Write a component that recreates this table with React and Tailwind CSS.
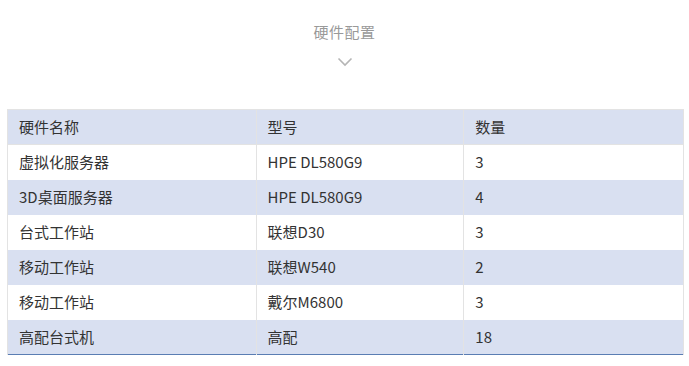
const rows = [
  ["虚拟化服务器", "HPE DL580G9", "3"],
  ["3D桌面服务器", "HPE DL580G9", "4"],
  ["台式工作站", "联想D30", "3"],
  ["移动工作站", "联想W540", "2"],
  ["移动工作站", "戴尔M6800", "3"],
  ["高配台式机", "高配", "18"],
];

export default function App() {
  return (
    <div className="w-[689px] h-[366px] bg-white font-['Microsoft_YaHei','Noto_Sans_CJK_SC',sans-serif] text-[#333]">
      <div className="flex flex-col items-center pt-[22px] h-[109px]">
        <h2 className="text-[15px] leading-[20px] text-[#999] tracking-[0.5px]">硬件配置</h2>
        <svg className="mt-[15px]" width="16" height="10" viewBox="0 0 16 10" fill="none">
          <path d="M1.5 1.5 L8 8 L14.5 1.5" stroke="#b5b5b5" strokeWidth="1.6" />
        </svg>
      </div>

      <table className="ml-[7px] w-[677px] border-collapse text-[15px] border-b border-b-[#5a7db3]">
        <colgroup>
          <col className="w-[249px]" />
          <col className="w-[208px]" />
          <col className="w-[220px]" />
        </colgroup>
        <thead>
          <tr className="bg-[#d9e0f1] h-[35px]">
            <th className="text-left font-normal pl-[11px] border border-[#e3e3e3]">硬件名称</th>
            <th className="text-left font-normal pl-[11px] border border-[#e3e3e3]">型号</th>
            <th className="text-left font-normal pl-[11px] border border-[#e3e3e3]">数量</th>
          </tr>
        </thead>
        <tbody>
          {rows.map((r, i) => (
            <tr key={i} className={`h-[35px] ${i % 2 === 0 ? "bg-white" : "bg-[#d9e0f1]"}`}>
              {r.map((c, j) => (
                <td key={j} className="pl-[11px] border-x border-[#e3e3e3]">
                  {c}
                </td>
              ))}
            </tr>
          ))}
        </tbody>
      </table>
    </div>
  );
}
